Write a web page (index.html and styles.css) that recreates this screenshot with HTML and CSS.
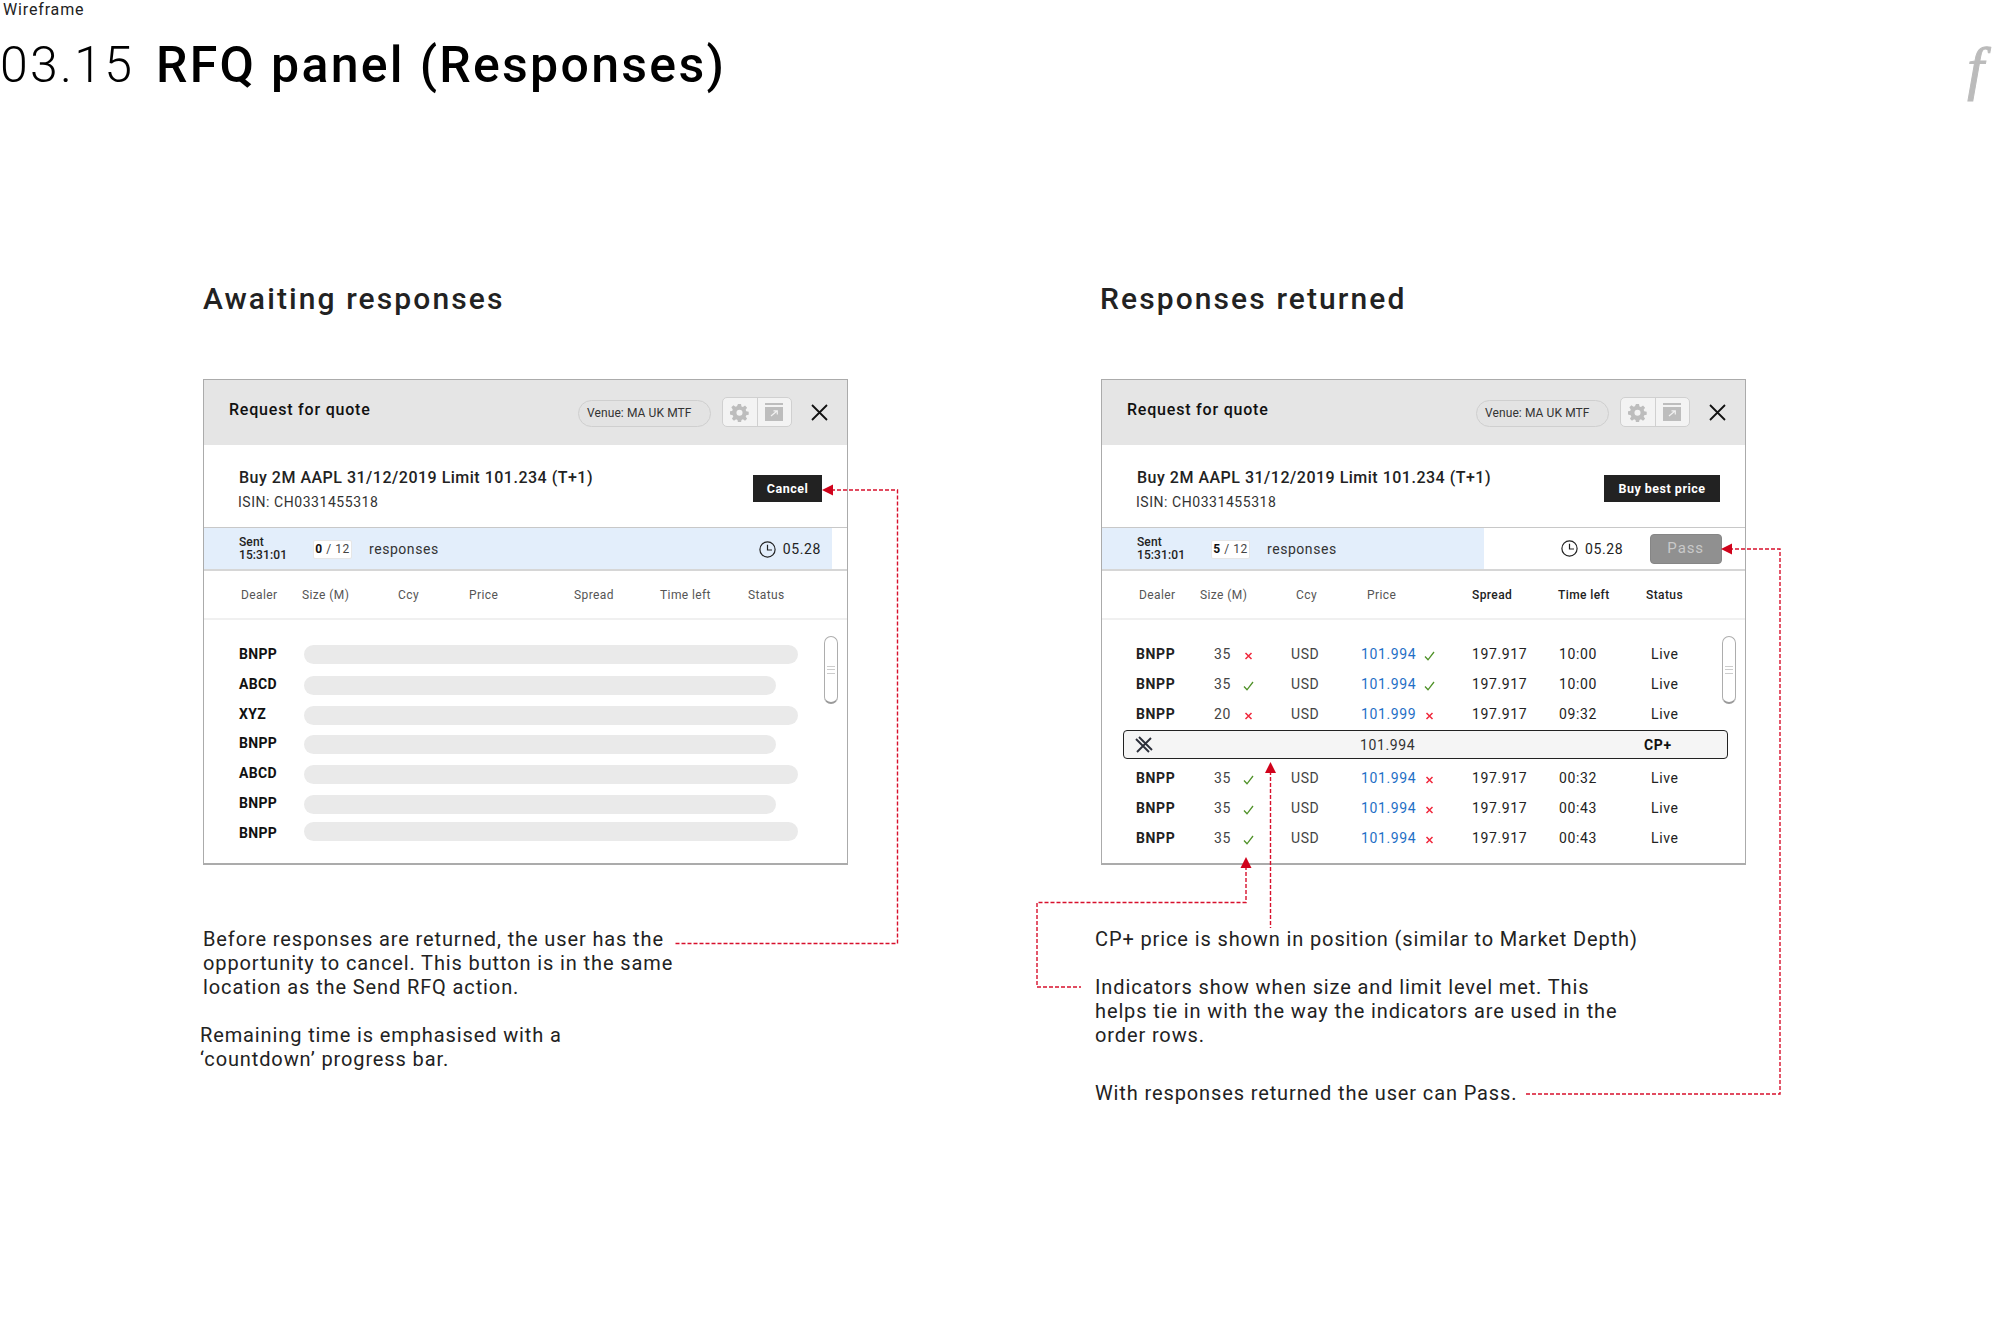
FILE: index.html
```html
<!DOCTYPE html>
<html lang="en">
<head>
<meta charset="utf-8">
<title>03.15 RFQ panel (Responses)</title>
<link rel="stylesheet" href="styles.css">
</head>
<body>
<svg class="defs" width="0" height="0" aria-hidden="true">
  <symbol id="ok" viewBox="0 0 11 10"><path d="M1 5.5 L4 8.8 L10 1" fill="none" stroke="#4f9128" stroke-width="1.3"/></symbol>
  <symbol id="no" viewBox="0 0 11 10"><path d="M2.5 2 L8.5 8 M8.5 2 L2.5 8" fill="none" stroke="#f0283c" stroke-width="1.5"/></symbol>
  <symbol id="gear" viewBox="0 0 20 20"><path fill="#bdbdbd" fill-rule="evenodd" d="M8.4 1h3.2l.5 2.6 1.5.6 2.2-1.5 2.2 2.2-1.5 2.2.6 1.5 2.6.5v3.2l-2.6.5-.6 1.5 1.5 2.2-2.2 2.2-2.2-1.5-1.5.6-.5 2.6H8.4l-.5-2.6-1.5-.6-2.2 1.5-2.2-2.2 1.5-2.2-.6-1.5L-.3 12V8.8l2.6-.5.6-1.5-1.5-2.2 2.2-2.2 2.2 1.5 1.5-.6zM10 7a3.2 3.2 0 1 0 0 6.4A3.2 3.2 0 0 0 10 7z"/></symbol>
  <symbol id="popout" viewBox="0 0 18 18"><path fill="#bdbdbd" d="M0 0h18v2H0zM0 4h18v14H0z"/><path d="M6 13 L12 8 M8.5 7.8 H12.3 V11.5" fill="none" stroke="#f1f1f1" stroke-width="1.2"/></symbol>
  <symbol id="clock" viewBox="0 0 17 17"><circle cx="8.5" cy="8.5" r="7.6" fill="none" stroke="#222" stroke-width="1.2"/><path d="M8.5 3.8V9H13" fill="none" stroke="#222" stroke-width="1.2"/></symbol>
  <symbol id="close" viewBox="0 0 17 17"><path d="M1 1 L16 16 M16 1 L1 16" fill="none" stroke="#111" stroke-width="1.8"/></symbol>
  <symbol id="cp" viewBox="0 0 18 18"><path d="M1 3 L14 16 M4 1 L17 14 M16 2 L2 16" fill="none" stroke="#2c2f3a" stroke-width="1.9"/></symbol>
</svg>

<div class="page">
  <header class="top">
    <div class="top-text">
      <div class="kicker">Wireframe</div>
      <h1 class="title"><span class="num">03.15</span><span class="name">RFQ panel (Responses)</span></h1>
    </div>
    <div class="logo">f</div>
  </header>

  <main class="columns">
    <section class="col">
      <h2 class="heading">Awaiting responses</h2>
      <div class="panel">
        <div class="p-head">
          <div class="p-title">Request for quote</div>
          <div class="venue">Venue: MA UK MTF</div>
          <div class="tools">
            <span class="tool"><svg class="i-gear"><use href="#gear"/></svg></span>
            <span class="tool"><svg class="i-pop"><use href="#popout"/></svg></span>
          </div>
          <svg class="i-close"><use href="#close"/></svg>
        </div>
        <div class="p-order">
          <div class="order-text">
            <div class="order-line">Buy 2M AAPL 31/12/2019 Limit 101.234 (T+1)</div>
            <div class="isin">ISIN: CH0331455318</div>
          </div>
          <button class="btn-dark btn-cancel">Cancel</button>
        </div>
        <div class="p-status">
          <div class="progress progress-full">
            <div class="sent">Sent<br>15:31:01</div>
            <div class="count"><b>0</b> / 12</div>
            <div class="resp">responses</div>
            <div class="timer"><svg class="i-clock"><use href="#clock"/></svg><span>05.28</span></div>
          </div>
        </div>
        <div class="thead">
          <span>Dealer</span><span>Size (M)</span><span>Ccy</span><span>Price</span><span>Spread</span><span>Time left</span><span>Status</span>
        </div>
        <div class="tbody">
          <div class="skel"><b>BNPP</b><i class="bar"></i></div>
          <div class="skel"><b>ABCD</b><i class="bar bar-s"></i></div>
          <div class="skel"><b>XYZ</b><i class="bar"></i></div>
          <div class="skel"><b>BNPP</b><i class="bar bar-s"></i></div>
          <div class="skel"><b>ABCD</b><i class="bar"></i></div>
          <div class="skel"><b>BNPP</b><i class="bar bar-s"></i></div>
          <div class="skel"><b>BNPP</b><i class="bar"></i></div>
          <div class="scroll"><span></span></div>
        </div>
      </div>
      <div class="notes">
        <p>Before responses are returned, the user has the<br>opportunity to cancel. This button is in the same<br>location as the Send RFQ action.</p>
        <p class="note-out">Remaining time is emphasised with a<br>‘countdown’ progress bar.</p>
      </div>
    </section>

    <section class="col">
      <h2 class="heading heading-r">Responses returned</h2>
      <div class="panel">
        <div class="p-head">
          <div class="p-title">Request for quote</div>
          <div class="venue">Venue: MA UK MTF</div>
          <div class="tools">
            <span class="tool"><svg class="i-gear"><use href="#gear"/></svg></span>
            <span class="tool"><svg class="i-pop"><use href="#popout"/></svg></span>
          </div>
          <svg class="i-close"><use href="#close"/></svg>
        </div>
        <div class="p-order">
          <div class="order-text">
            <div class="order-line">Buy 2M AAPL 31/12/2019 Limit 101.234 (T+1)</div>
            <div class="isin">ISIN: CH0331455318</div>
          </div>
          <button class="btn-dark btn-buy">Buy best price</button>
        </div>
        <div class="p-status">
          <div class="progress progress-part">
            <div class="sent">Sent<br>15:31:01</div>
            <div class="count"><b>5</b> / 12</div>
            <div class="resp">responses</div>
          </div>
          <div class="timer timer-free"><svg class="i-clock"><use href="#clock"/></svg><span>05.28</span></div>
          <button class="btn-pass">Pass</button>
        </div>
        <div class="thead thead-live">
          <span>Dealer</span><span>Size (M)</span><span>Ccy</span><span>Price</span><span>Spread</span><span>Time left</span><span>Status</span>
        </div>
        <div class="tbody">
          <div class="row"><b>BNPP</b><span>35</span><svg class="mk"><use href="#no"/></svg><span>USD</span><span class="px">101.994</span><svg class="mk"><use href="#ok"/></svg><span class="dk">197.917</span><span class="dk">10:00</span><span class="dk">Live</span></div>
          <div class="row"><b>BNPP</b><span>35</span><svg class="mk"><use href="#ok"/></svg><span>USD</span><span class="px">101.994</span><svg class="mk"><use href="#ok"/></svg><span class="dk">197.917</span><span class="dk">10:00</span><span class="dk">Live</span></div>
          <div class="row"><b>BNPP</b><span>20</span><svg class="mk"><use href="#no"/></svg><span>USD</span><span class="px">101.999</span><svg class="mk"><use href="#no"/></svg><span class="dk">197.917</span><span class="dk">09:32</span><span class="dk">Live</span></div>
          <div class="cp-row"><svg class="i-cp"><use href="#cp"/></svg><span class="cp-price">101.994</span><b class="cp-tag">CP+</b></div>
          <div class="row"><b>BNPP</b><span>35</span><svg class="mk"><use href="#ok"/></svg><span>USD</span><span class="px">101.994</span><svg class="mk"><use href="#no"/></svg><span class="dk">197.917</span><span class="dk">00:32</span><span class="dk">Live</span></div>
          <div class="row"><b>BNPP</b><span>35</span><svg class="mk"><use href="#ok"/></svg><span>USD</span><span class="px">101.994</span><svg class="mk"><use href="#no"/></svg><span class="dk">197.917</span><span class="dk">00:43</span><span class="dk">Live</span></div>
          <div class="row"><b>BNPP</b><span>35</span><svg class="mk"><use href="#ok"/></svg><span>USD</span><span class="px">101.994</span><svg class="mk"><use href="#no"/></svg><span class="dk">197.917</span><span class="dk">00:43</span><span class="dk">Live</span></div>
          <div class="scroll"><span></span></div>
        </div>
      </div>
      <div class="notes notes-r">
        <p>CP+ price is shown in position (similar to Market Depth)</p>
        <p class="note-b">Indicators show when size and limit level met. This<br>helps tie in with the way the indicators are used in the<br>order rows.</p>
        <p class="note-c">With responses returned the user can Pass.</p>
      </div>
    </section>
  </main>

  <svg class="links" viewBox="0 0 2000 1325" aria-hidden="true">
    <g class="link-line">
      <path d="M831 490H897.5V943.5H674"/>
      <path d="M1729 549H1780V1094H1524"/>
      <path d="M1246 866V902.5H1037V987H1081"/>
      <path d="M1270.5 771V928"/>
    </g>
    <g class="link-head">
      <path d="M822 490L833 484.5V495.5Z"/>
      <path d="M1721 549L1732 543.5V554.5Z"/>
      <path d="M1246 857L1240.5 868H1251.5Z"/>
      <path d="M1270.5 762L1265 773H1276Z"/>
    </g>
  </svg>
</div>
</body>
</html>
```

FILE: styles.css
```css
* { box-sizing: border-box; }
html, body { margin: 0; padding: 0; background: #fff; }
body { font-family: Roboto, "Liberation Sans", sans-serif; color: #222; }
.defs { position: absolute; }
.page { position: relative; width: 2000px; height: 1325px; overflow: hidden; }

/* page header */
.top { display: flex; justify-content: space-between; align-items: flex-start; height: 274px; }
.top-text { padding-left: 3px; }
.kicker { font-size: 16px; line-height: 18px; letter-spacing: 0.85px; color: #222; padding-top: 1px; height: 18px; }
.title { margin: 17px 0 0 -3px; font-size: 50px; line-height: 60px; font-weight: 400; letter-spacing: 2.3px; color: #000; display: flex; }
.num { font-weight: 300; margin-right: 21.5px; }
.name { font-weight: 500; }
.logo { font-family: "Liberation Serif", serif; font-style: italic; font-size: 60px; line-height: 70px; color: #bbb; margin: 33px 16px 0 0; -webkit-text-stroke: 1px #bbb; }

/* columns */
.columns { display: grid; grid-template-columns: 898px 700px; padding-left: 203px; }
.heading { margin: 0 0 70px; height: 35px; font-size: 30px; line-height: 50px; font-weight: 500; letter-spacing: 2.1px; color: #222; }
.heading-r { margin-left: -1px; }

/* panel */
.panel { width: 645px; height: 486px; border: 1px solid #ababab; border-bottom-width: 2px; background: #fff; }
.p-head { height: 65px; background: #e5e5e5; display: flex; align-items: flex-start; padding: 0 19px 0 25px; }
.p-title { font-size: 16px; font-weight: 500; letter-spacing: 0.8px; color: #111; line-height: 20px; margin-top: 20px; flex: 1; }
.venue { width: 133px; height: 27px; margin-top: 20px; border: 1.5px solid #cfcfcf; border-radius: 14px; background: #e3e3e3; font-size: 12px; letter-spacing: 0.1px; line-height: 25px; padding-left: 8px; color: #333; }
.tools { display: flex; width: 70px; height: 30px; margin: 17px 19px 0 11px; border: 1.5px solid #d0d0d0; border-radius: 5px; background: #f3f3f3; }
.tool { flex: 1; display: flex; align-items: center; justify-content: center; }
.tool + .tool { border-left: 1.5px solid #d0d0d0; }
.i-gear { width: 19px; height: 19px; }
.i-pop { width: 18px; height: 18px; }
.i-close { width: 17px; height: 17px; margin-top: 24px; }

.p-order { height: 83px; display: flex; justify-content: space-between; align-items: flex-start; padding: 0 25px 0 35px; }
.order-line { font-size: 16px; line-height: 20px; font-weight: 500; letter-spacing: 0.5px; color: #222; margin-top: 23px; }
.isin { font-size: 14px; line-height: 18px; letter-spacing: 0.55px; margin-top: 5px; margin-left: -1px; color: #333; }
.btn-dark { height: 27px; margin-top: 30px; border: 0; padding: 0; background: #222; color: #fff; font-family: inherit; font-size: 12.5px; font-weight: 700; letter-spacing: 0.5px; }
.btn-cancel { width: 69px; }
.btn-buy { width: 116px; }

.p-status { height: 44px; margin-top: -1px; border-top: 1px solid #c8c8c8; border-bottom: 2px solid #d6d6d6; display: flex; align-items: center; }
.progress { height: 41px; background: #e3eefb; display: flex; align-items: center; padding: 1px 0 0 35px; }
.progress-full { width: 628px; }
.progress-part { width: 382px; }
.sent { font-size: 12px; line-height: 13px; font-weight: 500; letter-spacing: 0.1px; width: 74px; color: #222; }
.count { width: 39px; height: 19px; background: #fff; border: 1px solid #e6e6e6; border-radius: 2px; font-size: 12px; line-height: 17px; text-align: center; letter-spacing: 0.5px; color: #444; }
.count b { color: #111; }
.resp { font-size: 14px; letter-spacing: 0.55px; margin-left: 17px; color: #333; }
.timer { display: flex; align-items: center; gap: 7px; margin-left: auto; margin-right: 11px; font-size: 14px; letter-spacing: 0.6px; color: #222; }
.timer-free { margin-left: 77px; margin-right: 27px; }
.i-clock { width: 17px; height: 17px; }
.btn-pass { width: 72px; height: 30px; margin-top: 1px; border: 1px solid #868686; border-radius: 4px; background: #909090; color: #c9c9c9; font-family: inherit; font-size: 15px; letter-spacing: 0.9px; padding: 0 1px 2px 0; }

.thead { height: 49px; display: grid; grid-template-columns: 61px 96px 71px 105px 86px 88px auto; padding-left: 37px; align-items: center; font-size: 12px; letter-spacing: 0.4px; color: #555; border-bottom: 2px solid #f0f0f0; }
.thead-live span:nth-child(n+5) { color: #222; font-weight: 500; }

.tbody { position: relative; padding-top: 19px; }
.skel { height: 30px; display: grid; grid-template-columns: 65px 1fr; padding-left: 35px; align-items: center; font-size: 14px; letter-spacing: 0.3px; color: #111; }
.skel b { font-weight: 700; }
.skel:nth-child(4) { margin-top: -1px; }
.bar { display: block; width: 494px; height: 19px; border-radius: 10px; background: #eaeaea; margin-top: 2px; }
.bar-s { width: 472px; }
.skel:first-child .bar { margin-top: 1px; }
.skel:nth-child(7) .bar { margin-top: 0; margin-bottom: 3px; }

.scroll { position: absolute; top: 16px; left: 620px; width: 14px; height: 68px; border: 1px solid #adadad; border-bottom: 2px solid #9a9a9a; border-radius: 7px; background: #fff; display: flex; align-items: center; justify-content: center; }
.scroll span { width: 8px; height: 8px; border-top: 1px solid #ccc; border-bottom: 1px solid #ccc; position: relative; }
.scroll span::after { content: ""; position: absolute; left: 0; right: 0; top: 2.5px; height: 1px; background: #ccc; }

.row { height: 30px; display: grid; grid-template-columns: 78px 29px 48px 70px 63px 48px 87px 92px auto; padding-left: 34px; align-items: center; font-size: 14px; letter-spacing: 0.6px; color: #444; }
.row b { font-weight: 700; color: #222; }
.row .px { color: #1f6fc6; }
.row .dk { color: #222; }
.mk { width: 11px; height: 10px; margin-top: 4px; }

.cp-row { height: 29px; margin: 1px 17px 4px 21px; border: 1.5px solid #222; border-radius: 4px; background: #f5f5f5; display: flex; align-items: center; font-size: 14px; letter-spacing: 0.6px; color: #333; padding-left: 11px; }
.i-cp { width: 18px; height: 18px; }
.cp-price { margin-left: 207px; }
.cp-tag { margin-left: 229px; font-weight: 700; color: #111; }

/* annotations */
.notes { margin-top: 62px; font-size: 20px; line-height: 24px; letter-spacing: 0.88px; color: #222; }
.notes p { margin: 0; }
.notes .note-out { margin: 24px 0 0 -3px; }
.notes-r { margin-left: -6px; }
.notes .note-b { margin-top: 24px; }
.notes .note-c { margin-top: 34px; }

/* red connectors laid over the page */
.links { position: absolute; left: 0; top: 0; width: 2000px; height: 1325px; pointer-events: none; }
.link-line path { fill: none; stroke: #d8102c; stroke-width: 1.4; stroke-dasharray: 4 2; }
.link-head path { fill: #d0021b; }
```
